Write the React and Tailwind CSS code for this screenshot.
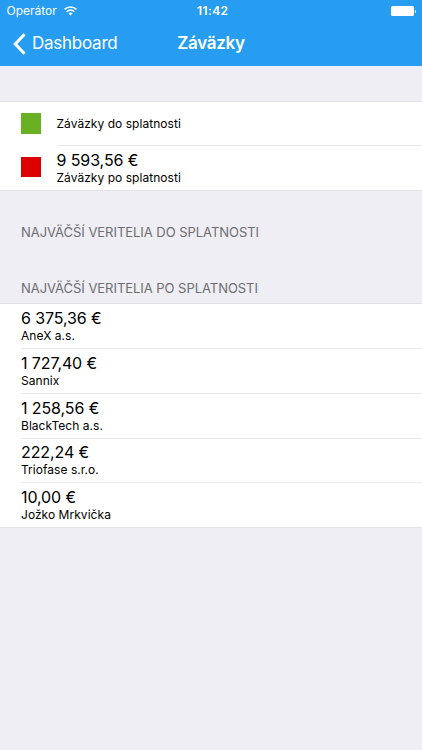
import React from 'react';

const summary = [
  { color: 'bg-[#6ab023]', amount: null, label: 'Záväzky do splatnosti' },
  { color: 'bg-[#dc0000]', amount: '9 593,56 €', label: 'Záväzky po splatnosti' },
];

const creditors = [
  { name: 'AneX a.s.', amount: '6 375,36 €' },
  { name: 'Sannix', amount: '1 727,40 €' },
  { name: 'BlackTech a.s.', amount: '1 258,56 €' },
  { name: 'Triofase s.r.o.', amount: '222,24 €' },
  { name: 'Jožko Mrkvička', amount: '10,00 €' },
];

const StatusBar = () => (
  <div className="grid h-[22px] grid-cols-3 items-center pr-[6px] pl-[6.5px] text-[12px] leading-none">
    <div className="flex items-center gap-[7px]">
      <span>Operátor</span>
      <svg width="13" height="10" viewBox="0 0 13 10" fill="none" stroke="currentColor" strokeWidth="1.6">
        <path d="M0.6 3.4a8.4 8.4 0 0 1 11.8 0" />
        <path d="M2.7 5.7a5.4 5.4 0 0 1 7.6 0" />
        <path d="M6.5 9.5 4.5 7.5a2.8 2.8 0 0 1 4 0z" fill="currentColor" stroke="none" />
      </svg>
    </div>
    <span className="pl-[3px] text-center font-semibold tracking-[0.4px]">11:42</span>
    <div className="flex items-center justify-end gap-px">
      <div className="h-[10px] w-[23px] rounded-[1.5px] bg-white" />
      <div className="h-[3px] w-px rounded-r-full bg-white" />
    </div>
  </div>
);

const NavBar = () => (
  <div className="grid h-[43px] grid-cols-[1fr_auto_1fr] items-center px-[13px]">
    <button className="flex items-center gap-[6px] text-[17px] tracking-[-0.25px]">
      <svg width="13" height="22" viewBox="0 0 13 22" fill="none" stroke="currentColor" strokeWidth="3">
        <path d="M11.6 1.3 2.2 11l9.4 9.7" />
      </svg>
      Dashboard
    </button>
    <h1 className="text-[17px] font-semibold tracking-[-0.3px]">Záväzky</h1>
  </div>
);

const RowText = ({ amount, label }) => (
  <div className="flex h-full flex-col justify-center text-black">
    {amount && <p className="text-[16px] leading-[19px] tracking-[-0.1px]">{amount}</p>}
    <p className="text-[12px] leading-[15px] tracking-[0.04px]">{label}</p>
  </div>
);

const App = () => {
  return (
    <div className="min-h-screen bg-[#efeef4] font-['Inter','Liberation_Sans',sans-serif]">
      <header className="h-[65.5px] bg-[#279df1] text-white">
        <StatusBar />
        <NavBar />
      </header>

      <ul className="mt-[35.1px] border-y border-[#e2e1e6] bg-white pb-px">
        {summary.map((item, i) => (
          <li key={item.label} className="flex h-[43.7px] items-center pl-[20.5px]">
            <div className={`size-[20.5px] ${item.color}`} />
            <div className={`ml-[15.5px] h-full flex-1 ${i > 0 ? 'border-t border-[#e9e9eb]' : ''}`}>
              <RowText amount={item.amount} label={item.label} />
            </div>
          </li>
        ))}
      </ul>

      <h2 className="mt-[33px] pl-[21px] text-[13px] leading-4 tracking-[-0.04px] text-[#6d6d72]">
        NAJVÄČŠÍ VERITELIA DO SPLATNOSTI
      </h2>
      <h2 className="mt-[40px] pl-[21px] text-[13px] leading-4 tracking-[-0.04px] text-[#6d6d72]">
        NAJVÄČŠÍ VERITELIA PO SPLATNOSTI
      </h2>

      <ul className="mt-[6.6px] border-y border-[#e2e1e6] bg-white pl-[21px]">
        {creditors.map((c, i) => (
          <li key={c.name} className={`h-[44.7px] ${i > 0 ? 'border-t border-[#e9e9eb]' : ''}`}>
            <RowText amount={c.amount} label={c.name} />
          </li>
        ))}
      </ul>
    </div>
  );
};

export default App;
